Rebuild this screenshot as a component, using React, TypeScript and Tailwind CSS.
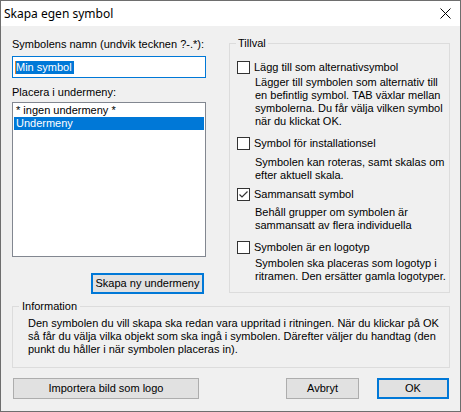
import React from "react";

function CheckBox({ checked }: { checked?: boolean }) {
  return (
    <div className="w-[13px] h-[13px] border border-[#333333] bg-white shrink-0 flex items-center justify-center">
      {checked && (
        <svg width="11" height="11" viewBox="0 0 11 11">
          <path d="M1.5 5.5 L4 8 L9.5 2.5" fill="none" stroke="#333333" strokeWidth="1.2" />
        </svg>
      )}
    </div>
  );
}

function Btn({ children, w, def }: { children: React.ReactNode; w: string; def?: boolean }) {
  return (
    <div
      className={`${w} h-[21px] bg-[#e1e1e1] flex items-center justify-center text-black ${
        def ? "border-2 border-[#0078d7]" : "border border-[#adadad]"
      }`}
    >
      {children}
    </div>
  );
}

export default function App() {
  return (
    <div className="w-[461px] h-[412px] border border-[#6e6e6e] bg-[#f0f0f0] flex flex-col font-['Liberation_Sans',Arial,sans-serif] text-[11px] leading-[13px] text-black overflow-hidden">
      {/* Title bar */}
      <div className="h-[25px] bg-white flex items-center justify-between pl-[3px] pr-[9px] shrink-0">
        <span className="font-['Noto_Sans',sans-serif] text-[12px] leading-[16px] text-black">Skapa egen symbol</span>
        <svg width="11" height="11" viewBox="0 0 11 11">
          <path d="M0.5 0.5 L10.5 10.5 M10.5 0.5 L0.5 10.5" stroke="#000" strokeWidth="1" />
        </svg>
      </div>

      {/* Top area */}
      <div className="flex pl-[11px] gap-[23px]">
        {/* Left column */}
        <div className="w-[194px] flex flex-col">
          <div className="mt-[12px] h-[13px]">Symbolens namn (undvik tecknen ?-.*):</div>
          <div className="mt-[5px] h-[22px] border border-[#0078d7] bg-white flex items-center pl-[2px]">
            <span className="border-l border-[#e0802e] bg-[#0078d7] text-white h-[13px] leading-[13px] pr-[2px]">Min symbol</span>
          </div>
          <div className="mt-[8px] h-[13px]">Placera i undermeny:</div>
          <div className="mt-[3px] h-[155px] border border-[#828790] bg-white px-[1px] py-[1px]">
            <div className="h-[13px] pl-[2px]">* ingen undermeny *</div>
            <div className="h-[13px] pl-[2px] bg-[#0078d7] text-white">Undermeny</div>
          </div>
          <div className="mt-[16px] ml-[79px]">
            <Btn w="w-[113px]" def>
              Skapa ny undermeny
            </Btn>
          </div>
        </div>

        {/* Tillval group */}
        <div className="relative mt-[17px] w-[221px] h-[250px] border border-[#dcdcdc] pl-[7px]">
          <span className="absolute -top-[7px] left-[6px] bg-[#f0f0f0] px-[2px]">Tillval</span>
          <div className="mt-[17px] flex items-center gap-[4px] h-[13px]">
            <CheckBox />
            <span>Lägg till som alternativsymbol</span>
          </div>
          <div className="mt-[2px] pl-[18px]">
            Lägger till symbolen som alternativ till
            <br />
            en befintlig symbol. TAB växlar mellan
            <br />
            symbolerna. Du får välja vilken symbol
            <br />
            när du klickat OK.
          </div>
          <div className="mt-[9px] flex items-center gap-[4px] h-[13px]">
            <CheckBox />
            <span>Symbol för installationsel</span>
          </div>
          <div className="mt-[6px] pl-[18px]">
            Symbolen kan roteras, samt skalas om
            <br />
            efter aktuell skala.
          </div>
          <div className="mt-[6px] flex items-center gap-[4px] h-[13px]">
            <CheckBox checked />
            <span>Sammansatt symbol</span>
          </div>
          <div className="mt-[5px] pl-[18px]">
            Behåll grupper om symbolen är
            <br />
            sammansatt av flera individuella
          </div>
          <div className="mt-[9px] flex items-center gap-[4px] h-[13px]">
            <CheckBox />
            <span>Symbolen är en logotyp</span>
          </div>
          <div className="mt-[3px] pl-[18px]">
            Symbolen ska placeras som logotyp i
            <br />
            ritramen. Den ersätter gamla logotyper.
          </div>
        </div>
      </div>

      {/* Information group */}
      <div className="relative ml-[11px] mt-[12px] w-[438px] h-[62px] border border-[#dcdcdc] pl-[15px] pt-[10px]">
        <span className="absolute -top-[7px] left-[6px] bg-[#f0f0f0] px-[3px]">Information</span>
        Den symbolen du vill skapa ska redan vara uppritad i ritningen. När du klickar på OK
        <br />
        så får du välja vilka objekt som ska ingå i symbolen. Därefter väljer du handtag (den
        <br />
        punkt du håller i när symbolen placeras in).
      </div>

      {/* Buttons */}
      <div className="flex items-center mt-[10px] pl-[12px]">
        <Btn w="w-[186px]">Importera bild som logo</Btn>
        <div className="ml-[87px]">
          <Btn w="w-[73px]">Avbryt</Btn>
        </div>
        <div className="ml-[18px]">
          <Btn w="w-[72px]" def>
            OK
          </Btn>
        </div>
      </div>
    </div>
  );
}
